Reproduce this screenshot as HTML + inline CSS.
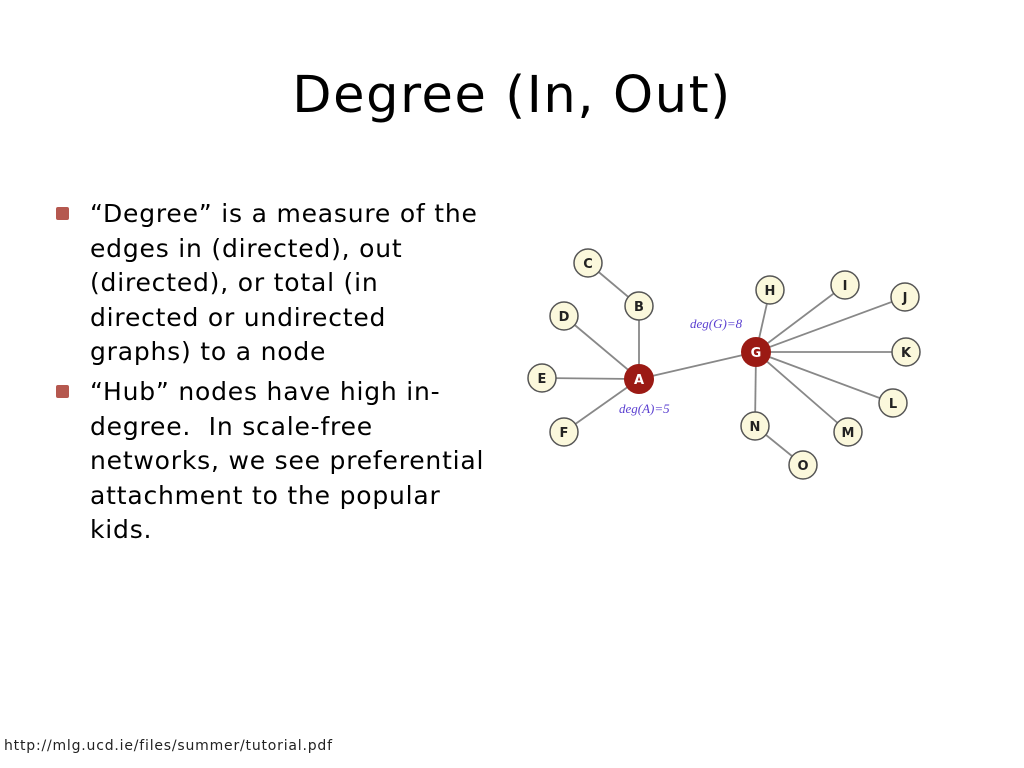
<!DOCTYPE html>
<html><head><style>
body{margin:0;width:1024px;height:768px;background:#fff;position:relative;overflow:hidden;font-family:"DejaVu Sans","Liberation Sans",sans-serif;color:#000}
h1{position:absolute;top:66px;left:0;width:1024px;text-align:center;margin:0;font-weight:normal;font-size:51px;letter-spacing:1.6px;font-family:"DejaVu Sans",sans-serif}
.b{position:absolute;left:90px;font-size:25px;line-height:34.5px;white-space:nowrap;letter-spacing:0.8px}
.sq{position:absolute;left:56px;width:13px;height:13px;background:#b5584f;border-radius:2px}
.f{position:absolute;left:4px;top:738px;font-size:14px;color:#222;letter-spacing:0.8px}
</style></head><body>
<h1>Degree (In, Out)</h1>
<div class="sq" style="top:207px"></div>
<div class="b" style="top:197px">“Degree” is a measure of the<br>edges in (directed), out<br>(directed), or total (in<br>directed or undirected<br>graphs) to a node</div>
<div class="sq" style="top:385px"></div>
<div class="b" style="top:375px">“Hub” nodes have high in-<br>degree.&nbsp; In scale-free<br>networks, we see preferential<br>attachment to the popular<br>kids.</div>
<svg style="position:absolute;left:0;top:0" width="1024" height="768">
<g stroke="#888" stroke-width="1.8">
<line x1="588" y1="263" x2="639" y2="306"/><line x1="639" y1="306" x2="639" y2="379"/>
<line x1="564" y1="316" x2="639" y2="379"/><line x1="542" y1="378" x2="639" y2="379"/>
<line x1="564" y1="432" x2="639" y2="379"/><line x1="639" y1="379" x2="756" y2="352"/>
<line x1="756" y1="352" x2="770" y2="290"/><line x1="756" y1="352" x2="845" y2="285"/>
<line x1="756" y1="352" x2="905" y2="297"/><line x1="756" y1="352" x2="906" y2="352"/>
<line x1="756" y1="352" x2="893" y2="403"/><line x1="756" y1="352" x2="848" y2="432"/>
<line x1="756" y1="352" x2="755" y2="426"/><line x1="755" y1="426" x2="803" y2="465"/>
</g>
<g stroke="#555" stroke-width="1.5" fill="#fbf8dc">
<circle cx="588" cy="263" r="14"/><circle cx="639" cy="306" r="14"/><circle cx="564" cy="316" r="14"/>
<circle cx="542" cy="378" r="14"/><circle cx="564" cy="432" r="14"/><circle cx="770" cy="290" r="14"/>
<circle cx="845" cy="285" r="14"/><circle cx="905" cy="297" r="14"/><circle cx="906" cy="352" r="14"/>
<circle cx="893" cy="403" r="14"/><circle cx="848" cy="432" r="14"/><circle cx="755" cy="426" r="14"/>
<circle cx="803" cy="465" r="14"/>
</g>
<circle cx="639" cy="379" r="15" fill="#9b1a14"/><circle cx="756" cy="352" r="15" fill="#9b1a14"/>
<g font-family="DejaVu Sans,sans-serif" font-size="13" font-weight="bold" text-anchor="middle" fill="#222">
<text x="588" y="268">C</text><text x="639" y="311">B</text><text x="564" y="321">D</text>
<text x="542" y="383">E</text><text x="564" y="437">F</text><text x="770" y="295">H</text>
<text x="845" y="290">I</text><text x="905" y="302">J</text><text x="906" y="357">K</text>
<text x="893" y="408">L</text><text x="848" y="437">M</text><text x="755" y="431">N</text>
<text x="803" y="470">O</text>
<text x="639" y="384" fill="#fff">A</text><text x="756" y="357" fill="#fff">G</text>
</g>
<g font-family="Liberation Serif,serif" font-style="italic" font-size="13" fill="#5a3fd0">
<text x="690" y="328">deg(G)=8</text><text x="619" y="413">deg(A)=5</text>
</g>
</svg>
<div class="f">http://mlg.ucd.ie/files/summer/tutorial.pdf</div>
</body></html>
